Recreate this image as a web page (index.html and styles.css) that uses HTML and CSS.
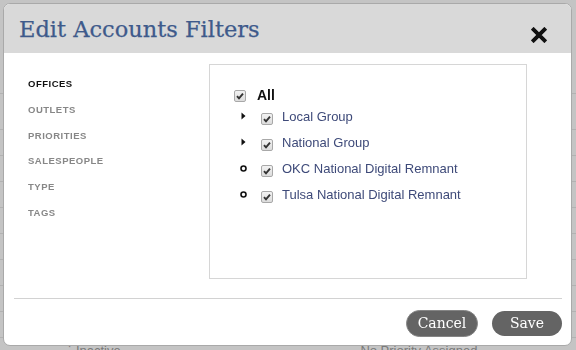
FILE: index.html
```html
<!DOCTYPE html>
<html>
<head>
<meta charset="utf-8">
<link rel="stylesheet" href="styles.css">
</head>
<body>
<div class="page">
  <div class="bg-row r1"></div>
  <div class="bg-row r2"></div>
  <div class="bg-row"></div>
  <div class="bg-row"></div>
  <div class="bg-row"></div>
  <div class="bg-row"></div>
  <div class="bg-row"></div>
  <div class="bg-row"></div>
  <div class="bg-row"></div>
  <div class="bg-row"></div>
  <div class="bg-row r-last">
    <span class="bg-a">&#729; Inactive</span>
    <span class="bg-b">No Priority Assigned</span>
  </div>
</div>
<div class="overlay">
  <div class="modal">
    <div class="modal-header">
      <h1 class="modal-title">Edit Accounts Filters</h1>
      <svg class="close" width="16" height="16" viewBox="0 0 16 16">
        <path d="M2.6 2.6 L13.4 13.4 M13.4 2.6 L2.6 13.4" stroke="#111" stroke-width="3.9" stroke-linecap="square" fill="none"/>
      </svg>
    </div>
    <div class="modal-body">
      <ul class="nav">
        <li class="active">OFFICES</li>
        <li>OUTLETS</li>
        <li>PRIORITIES</li>
        <li>SALESPEOPLE</li>
        <li>TYPE</li>
        <li>TAGS</li>
      </ul>
      <div class="tree">
        <div class="row-all">
          <span class="cb cb-all"><svg width="10" height="10" viewBox="0 0 10 10"><path d="M2 5.2 L4 7.4 L8 2.6" stroke="#333" stroke-width="1.9" fill="none"/></svg></span>
          <span class="all-label">All</span>
        </div>
        <div class="row">
          <span class="toggle"><svg width="5" height="8" viewBox="0 0 5 8"><path d="M0.5 0.5 L4.5 4 L0.5 7.5 Z" fill="#111"/></svg></span>
          <span class="cb"><svg width="10" height="10" viewBox="0 0 10 10"><path d="M2 5.2 L4 7.4 L8 2.6" stroke="#333" stroke-width="1.9" fill="none"/></svg></span>
          <span class="label">Local Group</span>
        </div>
        <div class="row">
          <span class="toggle"><svg width="5" height="8" viewBox="0 0 5 8"><path d="M0.5 0.5 L4.5 4 L0.5 7.5 Z" fill="#111"/></svg></span>
          <span class="cb"><svg width="10" height="10" viewBox="0 0 10 10"><path d="M2 5.2 L4 7.4 L8 2.6" stroke="#333" stroke-width="1.9" fill="none"/></svg></span>
          <span class="label">National Group</span>
        </div>
        <div class="row">
          <span class="toggle"><svg width="7" height="7" viewBox="0 0 7 7"><circle cx="3.5" cy="3.5" r="2.5" stroke="#111" stroke-width="1.6" fill="none"/></svg></span>
          <span class="cb"><svg width="10" height="10" viewBox="0 0 10 10"><path d="M2 5.2 L4 7.4 L8 2.6" stroke="#333" stroke-width="1.9" fill="none"/></svg></span>
          <span class="label">OKC National Digital Remnant</span>
        </div>
        <div class="row">
          <span class="toggle"><svg width="7" height="7" viewBox="0 0 7 7"><circle cx="3.5" cy="3.5" r="2.5" stroke="#111" stroke-width="1.6" fill="none"/></svg></span>
          <span class="cb"><svg width="10" height="10" viewBox="0 0 10 10"><path d="M2 5.2 L4 7.4 L8 2.6" stroke="#333" stroke-width="1.9" fill="none"/></svg></span>
          <span class="label">Tulsa National Digital Remnant</span>
        </div>
      </div>
    </div>
    <div class="sep"></div>
    <div class="modal-footer">
      <button class="btn btn-cancel">Cancel</button>
      <button class="btn btn-save">Save</button>
    </div>
  </div>
</div>
</body>
</html>
```
FILE: styles.css
```css
* { box-sizing: border-box; }
html, body { margin: 0; padding: 0; }
body {
  width: 576px;
  height: 350px;
  overflow: hidden;
  background: #c4c4c4;
  font-family: "Liberation Sans", Arial, sans-serif;
}
.page { width: 576px; height: 350px; overflow: hidden; }
.bg-row {
  height: 26px;
  border-bottom: 1px solid #b2b2b2;
}
.bg-row.r1 { height: 94px; }
.bg-row.r2 { height: 36px; }
.bg-row.r-last {
  height: 12px;
  overflow: hidden;
  border-bottom: none;
  font-size: 13px;
  line-height: 15px;
  color: #7a7a7a;
  padding-top: 5px;
}
.bg-a { margin-left: 68px; }
.bg-b { margin-left: 236px; }

.overlay {
  position: fixed;
  left: 0; top: 0; right: 0; bottom: 0;
  padding: 3px 4px 4px 3px;
  display: flex;
}
.modal {
  flex: 1;
  display: flex;
  flex-direction: column;
  background: #fff;
  border: 1px solid #a9a9a9;
  border-radius: 7px;
  overflow: hidden;
}
.modal-header {
  height: 49px;
  background: #d9d9d9;
  display: flex;
  align-items: center;
  justify-content: space-between;
  padding: 0 24px 0 15px;
}
.modal-title {
  margin: 0;
  font-family: "DejaVu Serif", serif;
  font-weight: normal;
  font-size: 22.5px;
  color: #3e5a8b;
  -webkit-text-stroke: 0.25px #3e5a8b;
}
.close { margin-top: 13px; display: block; }

.modal-body {
  display: flex;
  padding: 11px 0 19px 24px;
}
.nav {
  list-style: none;
  margin: 0;
  padding: 7px 0 0 0;
  width: 181px;
}
.nav li {
  height: 25.8px;
  line-height: 25.8px;
  font-size: 9.5px;
  font-weight: bold;
  letter-spacing: 0.5px;
  color: #878787;
}
.nav li.active { color: #111; }

.tree {
  width: 318px;
  height: 215px;
  border: 1px solid #d6d6d6;
  padding: 22px 0 0 24px;
}
.row-all {
  height: 16px;
  display: flex;
  align-items: center;
}
.row {
  height: 26px;
  display: flex;
  align-items: center;
}
.cb {
  width: 12px;
  height: 12px;
  border: 1px solid #a8a8a8;
  border-radius: 2px;
  background: linear-gradient(#f2f2f2, #dcdcdc);
  display: flex;
  align-items: center;
  justify-content: center;
  margin-top: 5px;
}
.cb-all { margin-top: 2px; }
.cb svg { display: block; }
.all-label {
  margin-left: 11px;
  font-size: 14px;
  font-weight: bold;
  color: #111;
}
.toggle {
  width: 18px;
  display: flex;
  justify-content: center;
  align-items: center;
}
.toggle svg { display: block; }
.row .cb { margin-left: 9px; }
.label {
  margin-left: 9px;
  font-size: 13px;
  color: #3e4a79;
}

.sep {
  height: 1px;
  background: #d2d2d2;
  margin: 0 9px 0 10px;
}
.modal-footer {
  flex: 1;
  display: flex;
  justify-content: flex-end;
  align-items: center;
  gap: 14px;
  padding: 2px 9px 0 0;
}
.btn {
  font-family: "DejaVu Serif", serif;
  font-size: 14px;
  color: #fff;
  background: #646464;
  border-radius: 14px;
  padding: 0;
}
.btn-cancel {
  width: 72px;
  height: 27px;
  border: 1px solid #858585;
}
.btn-save {
  width: 70px;
  height: 25px;
  border: none;
}
```
